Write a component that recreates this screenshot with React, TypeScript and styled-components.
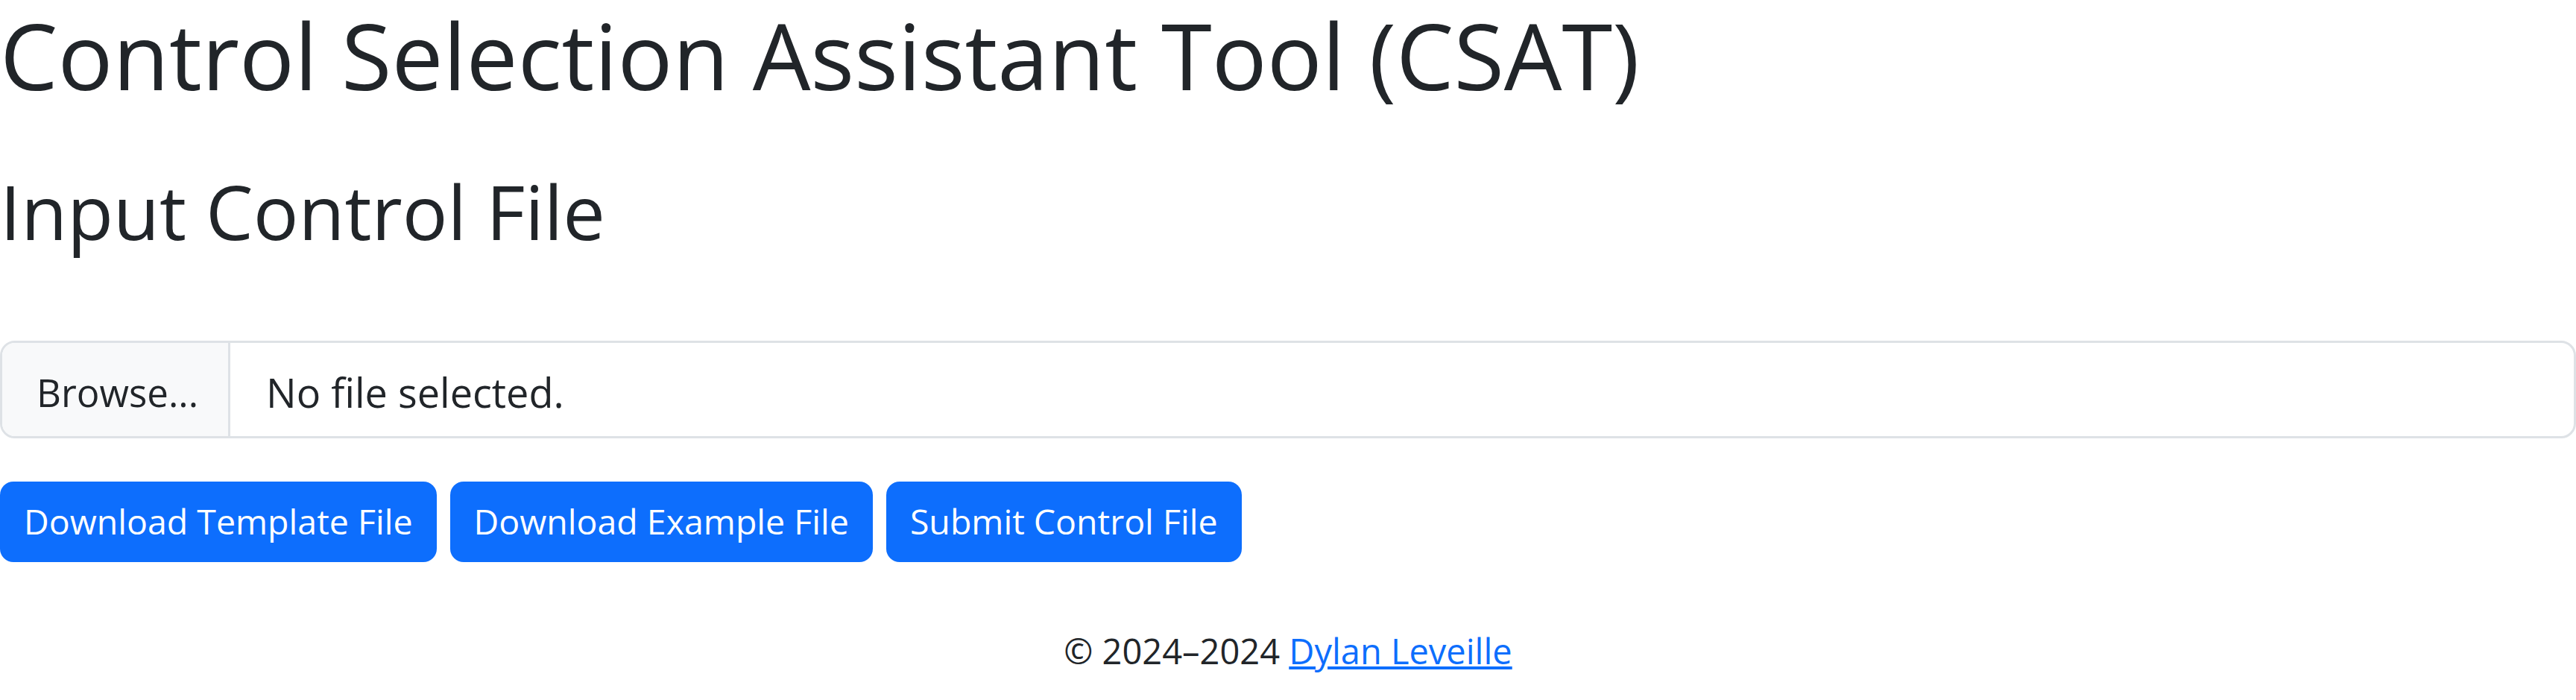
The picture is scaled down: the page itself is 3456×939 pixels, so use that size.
import { createGlobalStyle, styled } from 'styled-components';

const GlobalStyle = createGlobalStyle`
	html,
	body {
		margin: 0;
		padding: 0;
		background: #fff;
	}

	body {
		font-family: 'Open Sans', 'Noto Sans', sans-serif;
		color: #212529;
		font-size: 51px;
		line-height: 1.5;
	}
`;

const Page = styled.main`
	width: 100%;
	min-height: 939px;
	display: flex;
	flex-direction: column;
`;

const Title = styled.h1`
	margin: 0 0 75px 0;
	font-size: 123px;
	font-weight: 400;
	line-height: 1.2;
	white-space: nowrap;
`;

const SubTitle = styled.h2`
	margin: 0 0 113px 0;
	font-size: 101px;
	font-weight: 400;
	line-height: 1.2;
`;

const FileField = styled.label`
	display: flex;
	align-items: stretch;
	height: 131px;
	box-sizing: border-box;
	border: 3px solid #dee2e6;
	border-radius: 20px;
	overflow: hidden;
	cursor: pointer;
`;

const BrowseButton = styled.span`
	display: flex;
	align-items: center;
	width: 306px;
	box-sizing: border-box;
	padding: 8px 0 0 46px;
	background: #f8f9fa;
	border-right: 3px solid #dee2e6;
`;

const FileName = styled.span`
	display: flex;
	align-items: center;
	padding: 8px 0 0 48px;
	font-size: 54px;
`;

const ButtonRow = styled.div`
	display: flex;
	gap: 18px;
	margin-top: 58px;
`;

const PrimaryButton = styled.button`
	display: inline-flex;
	align-items: center;
	height: 108px;
	padding: 0 32px;
	border: none;
	border-radius: 18px;
	background: #0d6efd;
	color: #fff;
	font-family: inherit;
	font-size: 46.5px;
	line-height: 1.5;
	cursor: pointer;
`;

const Footer = styled.footer`
	margin-top: 84px;
	text-align: center;
	font-size: 47px;
`;

const FooterLink = styled.a`
	color: #0d6efd;
	text-decoration: underline;
`;

const actions = ['Download Template File', 'Download Example File', 'Submit Control File'];

const App = () => {
	return (
		<Page>
			<GlobalStyle />
			<Title>Control Selection Assistant Tool (CSAT)</Title>
			<SubTitle>Input Control File</SubTitle>
			<FileField>
				<BrowseButton>Browse...</BrowseButton>
				<FileName>No file selected.</FileName>
			</FileField>
			<ButtonRow>
				{actions.map((label) => (
					<PrimaryButton key={label} type="button">
						{label}
					</PrimaryButton>
				))}
			</ButtonRow>
			<Footer>
				© 2024–2024 <FooterLink href="#">Dylan Leveille</FooterLink>
			</Footer>
		</Page>
	);
};

export default App;
